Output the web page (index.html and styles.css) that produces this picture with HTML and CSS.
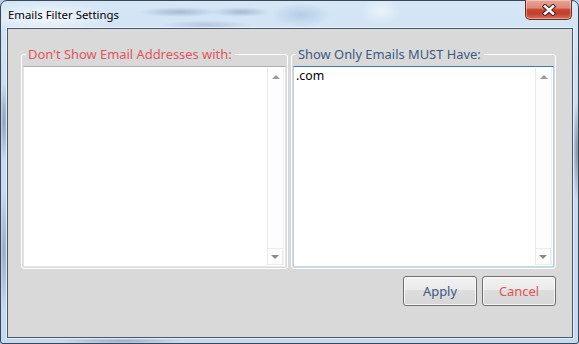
FILE: index.html
```html
<!DOCTYPE html>
<html lang="en">
<head>
<meta charset="utf-8">
<title>Emails Filter Settings</title>
<link rel="stylesheet" href="styles.css">
</head>
<body>
<div class="window">
  <div class="titlebar">
    <span class="title">Emails Filter Settings</span>
    <button class="close" aria-label="Close">
      <svg width="16" height="12" viewBox="0 0 16 12">
        <path d="M4 2.5 L12 9.5 M12 2.5 L4 9.5" stroke="#4a2a26" stroke-width="4.6" stroke-linecap="square" fill="none"/>
        <path d="M4 2.5 L12 9.5 M12 2.5 L4 9.5" stroke="#ffffff" stroke-width="2.4" stroke-linecap="square" fill="none"/>
      </svg>
    </button>
  </div>
  <div class="client">
    <div class="groups">
      <fieldset class="group">
        <legend class="legend legend-exclude">Don't Show Email Addresses with:</legend>
        <div class="textbox">
          <div class="text"></div>
          <div class="scrollbar">
            <span class="sb-btn"><span class="arrow arrow-up"></span></span>
            <span class="sb-btn"><span class="arrow arrow-down"></span></span>
          </div>
        </div>
      </fieldset>
      <fieldset class="group">
        <legend class="legend legend-include">Show Only Emails MUST Have:</legend>
        <div class="textbox textbox-focused">
          <div class="text">.com</div>
          <div class="scrollbar">
            <span class="sb-btn"><span class="arrow arrow-up"></span></span>
            <span class="sb-btn"><span class="arrow arrow-down"></span></span>
          </div>
        </div>
      </fieldset>
    </div>
    <div class="actions">
      <button class="btn btn-apply">Apply</button>
      <button class="btn btn-cancel">Cancel</button>
    </div>
  </div>
</div>
</body>
</html>
```

FILE: styles.css
```css
* { box-sizing: border-box; }

html, body {
  margin: 0;
  padding: 0;
  width: 579px;
  height: 344px;
  overflow: hidden;
  background: #b9cfe6;
}

.window {
  width: 579px;
  height: 344px;
  border: 1px solid #3a4756;
  border-radius: 7px 7px 3px 3px;
  display: flex;
  flex-direction: column;
  font-family: "Noto Sans", "Open Sans", sans-serif;
  background:
    radial-gradient(ellipse 70px 16px at 45px 16px, rgba(255,255,255,0.75), rgba(255,255,255,0)),
    radial-gradient(ellipse 40px 5px at 178px 11px, rgba(105,135,170,0.45), rgba(105,135,170,0)),
    radial-gradient(ellipse 30px 5px at 240px 11px, rgba(105,135,170,0.45), rgba(105,135,170,0)),
    radial-gradient(ellipse 45px 5px at 205px 24px, rgba(120,150,185,0.35), rgba(120,150,185,0)),
    radial-gradient(ellipse 30px 12px at 300px 14px, rgba(150,180,215,0.5), rgba(150,180,215,0)),
    radial-gradient(ellipse 20px 14px at 380px 10px, rgba(255,255,255,0.5), rgba(255,255,255,0)),
    radial-gradient(ellipse 4px 40px at 3px 120px, rgba(90,110,135,0.55), rgba(90,110,135,0)),
    radial-gradient(ellipse 4px 60px at 3px 250px, rgba(90,110,135,0.45), rgba(90,110,135,0)),
    radial-gradient(ellipse 4px 50px at 576px 150px, rgba(80,95,115,0.6), rgba(80,95,115,0)),
    radial-gradient(ellipse 60px 3px at 120px 340px, rgba(90,110,140,0.4), rgba(90,110,140,0)),
    linear-gradient(#d5e6f6, #c6dbf0 40%, #c4daf0);
}

.titlebar {
  height: 27px;
  display: flex;
  align-items: flex-start;
  justify-content: space-between;
  flex: none;
}

.title {
  margin: 6px 0 0 7px;
  font-size: 11.4px;
  line-height: 15px;
  color: #000;
}

.close {
  margin: -1px 6px 0 0;
  width: 47px;
  height: 20px;
  padding: 0;
  border: 1px solid #6e2d24;
  border-top: none;
  border-radius: 0 0 5px 5px;
  background: linear-gradient(#e7a596 0%, #dc8a79 40%, #c8442f 52%, #c2402c 72%, #d8705a 100%);
  box-shadow: inset 0 0 0 1px rgba(255,255,255,0.35);
  display: flex;
  align-items: center;
  justify-content: center;
}

.close svg { display: block; }

.client {
  flex: 1;
  margin: 0 5px 5px 6px;
  border: 1px solid #48576a;
  box-shadow: 0 0 0 1px rgba(255,255,255,0.55);
  background: #d9d9d9;
  padding: 17px 16px 0 13px;
  display: flex;
  flex-direction: column;
}

.groups {
  display: grid;
  grid-template-columns: 267px 1fr;
  column-gap: 3px;
}

.group {
  margin: 0;
  min-width: 0;
  padding: 4px 1px 1px 1px;
  border: 1px solid #ffffff;
  border-radius: 3px;
}

.legend {
  margin-left: 3px;
  padding: 0 3px 0 2px;
  font-size: 12.9px;
  line-height: 16px;
}

.legend-exclude { color: #e0555b; }
.legend-include { color: #3b5a82; }

.textbox {
  height: 201px;
  background: #ffffff;
  border: 1px solid;
  border-color: #abadb3 #e2e3ea #e3e9ef #e2e3ea;
  display: flex;
}

.textbox-focused {
  border-color: #3d7bad #b5cfe7 #b7d9ed #b5cfe7;
}

.text {
  flex: 1;
  padding: 1px 2px;
  font-size: 12.3px;
  line-height: 15px;
  color: #000;
}

.scrollbar {
  width: 17px;
  flex: none;
  margin: 1px 1px 1px 0;
  border-left: 1px solid #e9e9e9;
  border-right: 1px solid #f0f0f0;
  background: #fdfdfd;
  display: flex;
  flex-direction: column;
  justify-content: space-between;
}

.sb-btn {
  height: 17px;
  display: flex;
  align-items: center;
  justify-content: center;
}

.sb-btn:last-child {
  border: 1px solid #ececec;
  border-left: none;
}

.arrow {
  width: 0;
  height: 0;
  border-left: 4px solid transparent;
  border-right: 4px solid transparent;
}

.arrow-up { border-bottom: 4px solid #9a9a9a; }
.arrow-down { border-top: 4px solid #8a8a8a; }

.actions {
  margin-top: 7px;
  display: flex;
  justify-content: flex-end;
  gap: 5px;
}

.btn {
  width: 74px;
  height: 30px;
  padding: 0;
  border: 1px solid #707070;
  border-radius: 3px;
  background: linear-gradient(#f2f2f2 0%, #ebebeb 45%, #dddddd 48%, #d6d6d6 100%);
  box-shadow: inset 0 0 0 1px rgba(255,255,255,0.7);
  font-family: "Noto Sans", "Open Sans", sans-serif;
  font-size: 12.9px;
  line-height: 16px;
}

.btn-apply { color: #3b5a82; }
.btn-cancel { color: #e0555b; }
```
